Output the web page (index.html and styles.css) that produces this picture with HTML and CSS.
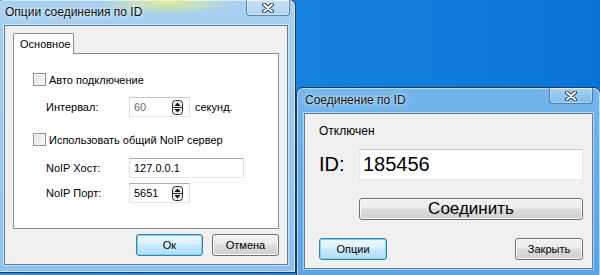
FILE: index.html
```html
<!DOCTYPE html>
<html lang="ru">
<head>
<meta charset="utf-8">
<title>Опции соединения по ID</title>
<link rel="stylesheet" href="styles.css">
</head>
<body>
<div class="desk">
  <div class="win win-opts">
    <div class="caption">
      <span class="title">Опции соединения по ID</span>
      <span class="close"><svg width="12" height="10" viewBox="0 0 12 10"><path d="M2 1.5 L10 8.5 M10 1.5 L2 8.5" stroke="#2b3e55" stroke-width="4" stroke-linecap="round"/><path d="M2 1.5 L10 8.5 M10 1.5 L2 8.5" stroke="#fff" stroke-width="2" stroke-linecap="round"/></svg></span>
    </div>
    <div class="client">
      <div class="tabs"><div class="tab">Основное</div></div>
      <div class="panel">
        <div class="check"><span class="box"></span><span>Авто подключение</span></div>
        <div class="row r-interval">
          <span class="lbl">Интервал:</span>
          <span class="field spin disabled"><span class="val">60</span><svg class="arrows" width="11" height="15" viewBox="0 0 11 15"><rect x="0.5" y="0.5" width="10" height="14" rx="3" fill="#ececec" stroke="#2a2a2a"/><line x1="1" y1="7.5" x2="10" y2="7.5" stroke="#2a2a2a"/><path d="M2.5 6 L5.5 2.5 L8.5 6Z" fill="#111"/><path d="M2.5 9 L5.5 12.5 L8.5 9Z" fill="#111"/></svg></span>
          <span class="unit">секунд.</span>
        </div>
        <div class="check c2"><span class="box"></span><span>Использовать общий NoIP сервер</span></div>
        <div class="row r-host">
          <span class="lbl">NoIP Хост:</span>
          <span class="field wide"><span class="val">127.0.0.1</span></span>
        </div>
        <div class="row r-port">
          <span class="lbl">NoIP Порт:</span>
          <span class="field spin"><span class="val">5651</span><svg class="arrows" width="11" height="15" viewBox="0 0 11 15"><rect x="0.5" y="0.5" width="10" height="14" rx="3" fill="#ececec" stroke="#2a2a2a"/><line x1="1" y1="7.5" x2="10" y2="7.5" stroke="#2a2a2a"/><path d="M2.5 6 L5.5 2.5 L8.5 6Z" fill="#111"/><path d="M2.5 9 L5.5 12.5 L8.5 9Z" fill="#111"/></svg></span>
        </div>
      </div>
      <div class="buttons">
        <button class="btn default">Ок</button>
        <button class="btn">Отмена</button>
      </div>
    </div>
  </div>

  <div class="win win-conn">
    <div class="caption">
      <span class="title">Соединение по ID</span>
      <span class="close"><svg width="12" height="10" viewBox="0 0 12 10"><path d="M2 1.5 L10 8.5 M10 1.5 L2 8.5" stroke="#2b3e55" stroke-width="4" stroke-linecap="round"/><path d="M2 1.5 L10 8.5 M10 1.5 L2 8.5" stroke="#fff" stroke-width="2" stroke-linecap="round"/></svg></span>
    </div>
    <div class="client">
      <div class="status">Отключен</div>
      <div class="idrow">
        <span class="idlbl">ID:</span>
        <span class="idfield">185456</span>
      </div>
      <button class="btn big">Соединить</button>
      <div class="foot">
        <button class="btn default">Опции</button>
        <button class="btn">Закрыть</button>
      </div>
    </div>
  </div>
</div>
</body>
</html>
```

FILE: styles.css
```css
html, body {
  margin: 0;
  padding: 0;
}
body {
  width: 600px;
  height: 275px;
  overflow: hidden;
  font-family: "Liberation Sans", Arial, sans-serif;
  font-size: 11px;
  color: #000;
}
.desk {
  position: relative;
  width: 600px;
  height: 275px;
  background: linear-gradient(90deg, #2a8fe2 0%, #1683de 45%, #0a74d6 100%);
  overflow: hidden;
}

/* ---------- windows ---------- */
.win {
  position: absolute;
  box-sizing: border-box;
  display: flex;
  flex-direction: column;
  border: 1px solid #1f3b5c;
  border-radius: 7px 7px 0 0;
  padding: 0 7px 7px 7px;
  box-shadow: inset 0 0 0 1px rgba(255,255,255,.55);
}
.win-opts {
  left: -4px;
  top: -1px;
  width: 300px;
  height: 274px;
  background:
    radial-gradient(ellipse 70px 16px at 170px 0px, rgba(232,240,140,.95), rgba(232,240,140,0) 100%),
    linear-gradient(180deg, #a7d0f1 0%, #9fcbf0 40%, #8fc2ee 100%);
}
.win-conn {
  left: 296px;
  top: 87px;
  width: 305px;
  height: 190px;
  background: linear-gradient(180deg, #74b6ec 0%, #64abe9 50%, #5aa3e6 100%);
}
.caption {
  position: relative;
  height: 25px;
  flex: none;
  display: flex;
  align-items: center;
}
.title {
  font-size: 12px;
  color: #0c0c0c;
  padding-left: 1px;
  text-shadow: 0 0 6px rgba(255,255,255,.9), 0 0 2px rgba(255,255,255,.8);
  margin-top: -1px;
}
.close {
  position: absolute;
  top: 0;
  right: -2px;
  width: 44px;
  height: 16px;
  box-sizing: border-box;
  border: 1px solid rgba(30,55,90,.55);
  border-top: none;
  border-radius: 0 0 4px 4px;
  background: linear-gradient(180deg, rgba(255,255,255,.35), rgba(255,255,255,.12));
  box-shadow: inset 0 0 0 1px rgba(255,255,255,.35);
  display: flex;
  align-items: center;
  justify-content: center;
}
.win-conn .close { right: 0; }

.client {
  flex: 1;
  background: #f0f0f0;
  border: 1px solid #5d7c9d;
  box-shadow: 0 0 0 1px rgba(255,255,255,.5);
  display: flex;
  flex-direction: column;
}

/* ---------- options dialog ---------- */
.win-opts .client {
  padding: 7px 8px 8px 8px;
}
.tabs {
  display: flex;
  height: 20px;
  position: relative;
  z-index: 1;
}
.tab {
  width: 61px;
  box-sizing: border-box;
  background: #fff;
  border: 1px solid #898c95;
  border-bottom: none;
  border-radius: 2px 2px 0 0;
  padding: 4px 0 0 6px;
  height: 21px;
}
.panel {
  height: 176px;
  box-sizing: border-box;
  background: #fff;
  border: 1px solid #898c95;
  padding: 19px 0 0 19px;
  display: flex;
  flex-direction: column;
}
.check {
  display: flex;
  align-items: center;
  height: 13px;
  gap: 3px;
}
.box {
  width: 11px;
  height: 11px;
  border: 1px solid #8f8f8f;
  background: linear-gradient(135deg, #dcdcdc 0%, #f4f4f4 70%, #ffffff 100%);
  box-shadow: inset 0 0 0 1px #f7f7f7;
  flex: none;
}
.row {
  display: flex;
  align-items: center;
  padding-left: 13px;
}
.r-interval { margin-top: 11px; }
.c2 { margin-top: 16px; }
.r-host { margin-top: 12px; }
.r-port { margin-top: 5px; }
.lbl {
  width: 83px;
  flex: none;
}
.field {
  box-sizing: border-box;
  height: 20px;
  background: #fff;
  border: 1px solid;
  border-color: #abadb3 #dbdfe6 #e3e9ef #e2e3ea;
  display: flex;
  align-items: center;
  padding: 0 6px 0 4px;
  font-size: 11px;
}
.field .val { flex: 1; }
.spin { width: 61px; }
.wide { width: 115px; }
.disabled { color: #6d6d6d; border-color: #c8c8c8 #e0e0e0 #e6e6e6 #e0e0e0; }
.arrows { flex: none; }
.unit { margin-left: 5px; }

.buttons {
  margin-top: auto;
  display: flex;
  justify-content: flex-end;
  gap: 9px;
  padding-right: 0;
}

/* ---------- buttons ---------- */
.btn {
  font-family: "Liberation Sans", Arial, sans-serif;
  font-size: 11px;
  color: #000;
  height: 22px;
  width: 67px;
  padding: 0;
  border: 1px solid #707070;
  border-radius: 3px;
  background: linear-gradient(180deg, #f2f2f2 0%, #ebebeb 45%, #dddddd 50%, #cfcfcf 100%);
  box-shadow: inset 0 0 0 1px #fbfbfb;
  cursor: default;
}
.btn.default {
  border-color: #3c7fb1;
  background: linear-gradient(180deg, #ecf7fd 0%, #dff2fc 45%, #c7e9fb 50%, #b2ddf6 100%);
  box-shadow: inset 0 0 0 1px #76d4f6;
}

/* ---------- connection dialog ---------- */
.win-conn .client {
  padding: 9px 9px 8px 14px;
}
.status {
  font-size: 12px;
  height: 16px;
  line-height: 16px;
}
.idrow {
  margin-top: 10px;
  display: flex;
  align-items: center;
}
.idlbl {
  width: 40px;
  font-size: 20px;
  flex: none;
}
.idfield {
  flex: 1;
  box-sizing: border-box;
  height: 31px;
  background: #fff;
  border: 1px solid;
  border-color: #c8cbd1 #e3e6ea #e8ebef #e3e6ea;
  padding: 0 0 0 3px;
  font-size: 20px;
  display: flex;
  align-items: center;
}
.btn.big {
  margin-top: 18px;
  margin-left: 40px;
  width: auto;
  height: 22px;
  font-size: 17px;
  line-height: 18px;
}
.foot {
  margin-top: auto;
  display: flex;
  justify-content: space-between;
}
.foot .btn { width: 68px; }
```
